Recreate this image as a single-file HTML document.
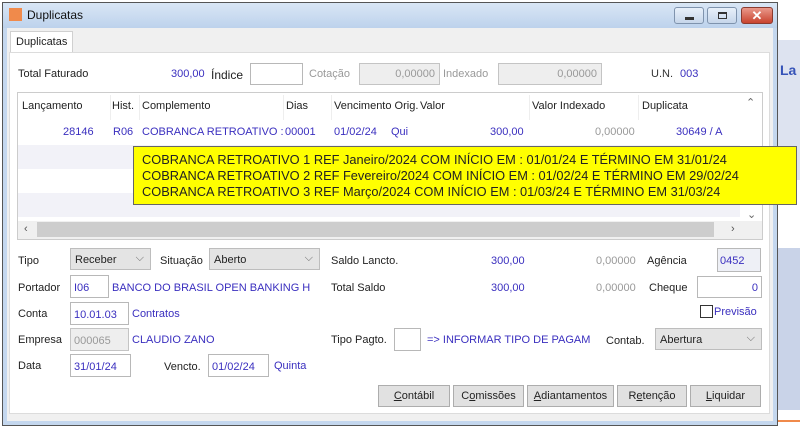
<!DOCTYPE html>
<html><head><meta charset="utf-8"><style>
*{margin:0;padding:0;box-sizing:border-box}
body{width:800px;height:430px;overflow:hidden;background:#fff;font-family:"Liberation Sans",sans-serif;font-size:11px;color:#222;position:relative}
.a{position:absolute;white-space:nowrap}
.b{color:#3a2fbf}
.g{color:#999}
.box{position:absolute;background:#fff;border:1px solid #b8b8b8}
.dis{background:#eee;border:1px solid #c4c4c4}
.cb{position:absolute;background:#e4e4e4;border:1px solid #bdbdbd;padding:5px 4px}
.cb:after{content:"⌵";position:absolute;right:6px;top:3px;color:#666;font-size:11px}
.btn{position:absolute;top:385px;height:22px;background:#e1e1e1;border:1px solid #adadad;text-align:center;line-height:20px}
.hd{position:absolute;top:100px;color:#222}
.row{position:absolute;left:18px;width:722px;height:24px}
</style></head><body>
<div class="a" style="left:0;top:0;width:800px;height:430px;background:#fff"></div>
<div class="a" style="left:778px;top:40px;width:22px;height:140px;background:#dde3f0"></div>
<div class="a" style="left:780px;top:62px;font-weight:bold;color:#3553b8;font-size:14px">La</div>
<div class="a" style="left:778px;top:248px;width:22px;height:162px;background:#c9d3e8"></div>
<!-- window -->
<div class="a" style="left:2px;top:2px;width:776px;height:424px;background:#c4d7ee;border:1px solid #555"></div>
<div class="a" style="left:3px;top:3px;width:774px;height:25px;background:linear-gradient(#d9e6f5,#bdd2ec)"></div>
<div class="a" style="left:9px;top:8px;width:13px;height:13px;background:#f08a4b"></div>
<div class="a" style="left:27px;top:8px;font-size:12px;color:#111">Duplicatas</div>
<div class="a" style="left:674px;top:7px;width:30px;height:17px;border:1px solid #7f93ad;border-radius:3px;background:linear-gradient(#e8f0fa,#c6d6ea)"><div class="a" style="left:10px;top:9px;width:9px;height:3px;background:#333"></div></div>
<div class="a" style="left:707px;top:7px;width:30px;height:17px;border:1px solid #7f93ad;border-radius:3px;background:linear-gradient(#e8f0fa,#c6d6ea)"><div class="a" style="left:10px;top:4px;width:9px;height:7px;border:1px solid #333;border-top-width:2px"></div></div>
<div class="a" style="left:741px;top:7px;width:32px;height:17px;border:1px solid #8a3b30;border-radius:3px;background:linear-gradient(#e9998b,#c9432f);color:#fff;font-weight:bold;text-align:center;font-size:13px;line-height:15px">✕</div>
<div class="a" style="left:7px;top:28px;width:766px;height:393px;background:#f0f0f0"></div>
<!-- tab -->
<div class="a" style="left:10px;top:31px;width:63px;height:22px;background:#fff;border:1px solid #d0d0d0;border-bottom:none;padding:4px 5px">Duplicatas</div>
<div class="a" style="left:9px;top:52px;width:761px;height:362px;background:#fff;border:1px solid #dcdcdc"></div>
<!-- top row -->
<div class="a" style="left:18px;top:68px">Total Faturado</div>
<div class="a b" style="left:171px;top:68px">300,00</div>
<div class="a" style="left:211px;top:68px;font-size:12px">Índice</div>
<div class="box" style="left:250px;top:63px;width:53px;height:22px"></div>
<div class="a g" style="left:309px;top:68px">Cotação</div>
<div class="box dis" style="left:359px;top:63px;width:81px;height:22px"><span class="a g" style="right:4px;top:4px">0,00000</span></div>
<div class="a g" style="left:443px;top:68px">Indexado</div>
<div class="box dis" style="left:498px;top:63px;width:104px;height:22px"><span class="a g" style="right:4px;top:4px">0,00000</span></div>
<div class="a" style="left:651px;top:68px;color:#333">U.N.</div>
<div class="a b" style="left:680px;top:68px">003</div>
<!-- grid -->
<div class="a" style="left:17px;top:92px;width:746px;height:148px;border:1px solid #ccc;background:#fff"></div>
<div class="a" style="left:18px;top:93px;width:722px;height:28px;background:#fff"></div>
<div class="hd" style="left:22px">Lançamento</div>
<div class="hd" style="left:112px">Hist.</div>
<div class="hd" style="left:142px">Complemento</div>
<div class="hd" style="left:286px">Dias</div>
<div class="hd" style="left:334px">Vencimento Orig.</div>
<div class="hd" style="left:420px">Valor</div>
<div class="hd" style="left:532px">Valor Indexado</div>
<div class="hd" style="left:642px">Duplicata</div>
<div class="a" style="left:110px;top:95px;width:1px;height:25px;background:#eee"></div>
<div class="a" style="left:139px;top:95px;width:1px;height:25px;background:#eee"></div>
<div class="a" style="left:283px;top:95px;width:1px;height:25px;background:#eee"></div>
<div class="a" style="left:331px;top:95px;width:1px;height:25px;background:#eee"></div>
<div class="a" style="left:529px;top:95px;width:1px;height:25px;background:#eee"></div>
<div class="a" style="left:638px;top:95px;width:1px;height:25px;background:#eee"></div>
<div class="a b" style="left:63px;top:126px">28146</div>
<div class="a b" style="left:113px;top:126px">R06</div>
<div class="a b" style="left:142px;top:126px">COBRANCA RETROATIVO :</div>
<div class="a b" style="left:285px;top:126px">00001</div>
<div class="a b" style="left:334px;top:126px">01/02/24</div>
<div class="a b" style="left:391px;top:126px">Qui</div>
<div class="a b" style="left:490px;top:126px">300,00</div>
<div class="a g" style="left:595px;top:126px">0,00000</div>
<div class="a b" style="left:676px;top:126px">30649 / A</div>
<div class="row" style="top:145px;background:#f2f2f8"></div>
<div class="row" style="top:169px;background:#fff"></div>
<div class="row" style="top:193px;background:#f2f2f8"></div>
<div class="a" style="left:740px;top:93px;width:22px;height:128px;background:#fff"></div>
<div class="a" style="left:746px;top:96px;color:#666">⌃</div>
<div class="a" style="left:747px;top:208px;color:#666">⌄</div>
<div class="a" style="left:18px;top:221px;width:744px;height:18px;background:#f0f0f0"></div>
<div class="a" style="left:37px;top:222px;width:677px;height:15px;background:#cdcdcd"></div>
<div class="a" style="left:24px;top:223px;color:#555">‹</div>
<div class="a" style="left:731px;top:223px;color:#555">›</div>
<!-- tooltip -->
<div class="a" style="left:133px;top:146px;width:664px;height:59px;background:#ffff00;border:1px solid #666;padding:5px 0 0 8px;font-size:12.8px;line-height:16px;color:#222">COBRANCA RETROATIVO 1 REF Janeiro/2024 COM INÍCIO EM : 01/01/24 E TÉRMINO EM 31/01/24<br>COBRANCA RETROATIVO 2 REF Fevereiro/2024 COM INÍCIO EM : 01/02/24 E TÉRMINO EM 29/02/24<br>COBRANCA RETROATIVO 3 REF Março/2024 COM INÍCIO EM : 01/03/24 E TÉRMINO EM 31/03/24</div>
<!-- form -->
<div class="a" style="left:18px;top:255px">Tipo</div>
<div class="cb" style="left:70px;top:248px;width:81px;height:22px">Receber</div>
<div class="a" style="left:160px;top:255px">Situação</div>
<div class="cb" style="left:209px;top:248px;width:111px;height:22px">Aberto</div>
<div class="a" style="left:331px;top:255px">Saldo Lancto.</div>
<div class="a b" style="left:491px;top:255px">300,00</div>
<div class="a g" style="left:596px;top:255px">0,00000</div>
<div class="a" style="left:647px;top:255px">Agência</div>
<div class="box" style="left:717px;top:248px;width:44px;height:24px;background:#eef0f6"><span class="a b" style="left:2px;top:6px">0452</span></div>
<div class="a" style="left:18px;top:282px">Portador</div>
<div class="box" style="left:70px;top:275px;width:39px;height:23px"><span class="a b" style="left:3px;top:6px">I06</span></div>
<div class="a b" style="left:112px;top:282px">BANCO DO BRASIL OPEN BANKING H</div>
<div class="a" style="left:331px;top:282px">Total Saldo</div>
<div class="a b" style="left:491px;top:282px">300,00</div>
<div class="a g" style="left:596px;top:282px">0,00000</div>
<div class="a" style="left:649px;top:282px">Cheque</div>
<div class="box" style="left:697px;top:276px;width:65px;height:22px"><span class="a b" style="right:3px;top:5px">0</span></div>
<div class="a" style="left:700px;top:305px;width:13px;height:13px;border:1px solid #333;background:#fff"></div>
<div class="a b" style="left:714px;top:306px">Previsão</div>
<div class="a" style="left:18px;top:308px">Conta</div>
<div class="box" style="left:70px;top:302px;width:59px;height:23px"><span class="a b" style="left:3px;top:6px">10.01.03</span></div>
<div class="a b" style="left:132px;top:308px">Contratos</div>
<div class="a" style="left:18px;top:334px">Empresa</div>
<div class="box dis" style="left:70px;top:328px;width:59px;height:23px"><span class="a g" style="left:3px;top:6px">000065</span></div>
<div class="a b" style="left:132px;top:334px">CLAUDIO ZANO</div>
<div class="a" style="left:331px;top:334px">Tipo Pagto.</div>
<div class="box" style="left:394px;top:328px;width:27px;height:23px"></div>
<div class="a b" style="left:427px;top:334px">=&gt; INFORMAR TIPO DE PAGAM</div>
<div class="a" style="left:606px;top:335px">Contab.</div>
<div class="cb" style="left:655px;top:328px;width:107px;height:22px">Abertura</div>
<div class="a" style="left:18px;top:360px">Data</div>
<div class="box" style="left:70px;top:354px;width:61px;height:23px"><span class="a b" style="left:3px;top:6px">31/01/24</span></div>
<div class="a" style="left:164px;top:361px">Vencto.</div>
<div class="box" style="left:208px;top:354px;width:61px;height:23px"><span class="a b" style="left:3px;top:6px">01/02/24</span></div>
<div class="a b" style="left:274px;top:360px">Quinta</div>
<div class="btn" style="left:378px;width:72px"><u>C</u>ontábil</div>
<div class="btn" style="left:453px;width:71px">C<u>o</u>missões</div>
<div class="btn" style="left:527px;width:87px"><u>A</u>diantamentos</div>
<div class="btn" style="left:617px;width:70px">R<u>e</u>tenção</div>
<div class="btn" style="left:690px;width:71px"><u>L</u>iquidar</div>
<div class="a" style="left:778px;top:420px;width:22px;height:2px;background:#f08a4b"></div>
</body></html>
